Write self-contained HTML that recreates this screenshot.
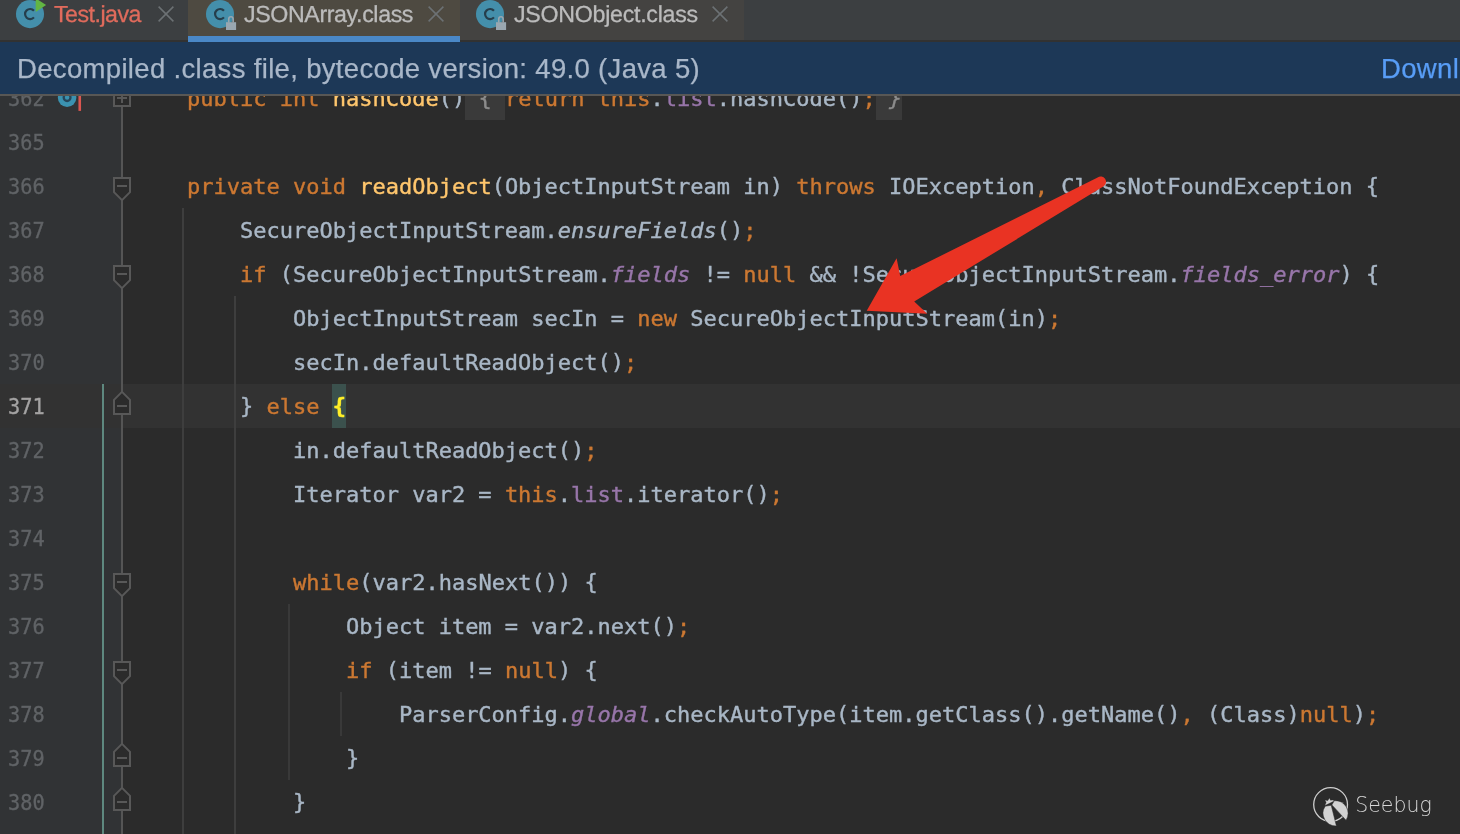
<!DOCTYPE html>
<html><head><meta charset="utf-8"><title>JSONArray.class</title>
<style>
*{margin:0;padding:0;box-sizing:border-box}
html,body{width:1460px;height:834px;overflow:hidden;background:#2b2b2b}
body{position:relative;font-family:"Liberation Sans",sans-serif}
#tabs{will-change:transform;position:absolute;left:0;top:0;width:1460px;height:42px;background:#3c3f41;overflow:hidden}
#tborder{position:absolute;left:0;top:40px;width:1460px;height:2px;background:#323232}
.tabbg{position:absolute;top:0;height:40px}
#uline{position:absolute;left:188px;top:36px;width:272px;height:6px;background:#4a88c7}
.lbl{position:absolute;top:-1px;-webkit-text-stroke-width:0.3px;text-rendering:geometricPrecision;font-size:23.2px;line-height:30px;color:#bbbbbb;white-space:nowrap}
#banner{will-change:transform;-webkit-text-stroke-width:0.25px;position:absolute;left:0;top:42px;width:1460px;height:54px;background:#1d3857;border-bottom:2px solid #585755;color:#a9b7c9;font-size:27.5px;line-height:54px;letter-spacing:0.33px;white-space:nowrap;overflow:hidden}
#editor{will-change:transform;position:absolute;left:0;top:96px;width:1460px;height:738px;overflow:hidden;background:#2b2b2b}
#gutter{position:absolute;left:0;top:0;width:123px;height:738px;background:#313335}
#curline{position:absolute;left:0;width:1460px;height:44px;background:#323232}
#gcur{position:absolute;left:0;width:123px;height:44px;background:#323232}
#foldline{position:absolute;left:121px;top:0;width:2px;height:738px;background:#555555}
#teal{position:absolute;left:102px;width:2px;height:500px;background:#5e887f}
.fm{position:absolute}
.ln{position:absolute;left:8px;-webkit-text-stroke-width:0.35px;margin-top:1px;transform:scale(0.922,0.975);transform-origin:0 30.6px;font-family:"DejaVu Sans Mono","Liberation Mono",monospace;font-size:22px;line-height:44px;height:44px;color:#606366;white-space:pre}
.ln.cur{color:#a4a3a3}
.cl{position:absolute;left:134px;margin-top:1px;-webkit-text-stroke-width:0.4px;font-family:"DejaVu Sans Mono","Liberation Mono",monospace;font-size:22px;line-height:44px;height:44px;color:#a9b7c6;white-space:pre}
.k{color:#cc7832}.m{color:#ffc66d}.f{color:#9876aa}.fi{color:#9876aa;font-style:italic}.i{font-style:italic}
.fold{background:#3a3a3a;color:#8c8c8c;display:inline-block;height:43px;line-height:44px;vertical-align:top}
.mb{color:#ffef28;font-weight:bold}
.fb{position:relative;top:-1.5px}
.p{position:relative;top:-1px}
#mbbg{position:absolute;left:332px;width:14px;height:44px;background:#3b514d}
.g{position:absolute;width:1.5px;background:#393939}
</style></head><body>
<div id="tabs">
<div class="tabbg" style="left:188px;width:272px;background:#4e4a41"></div>
<div class="tabbg" style="left:460px;width:284px;background:#444341"></div>
<div id="tborder"></div>
<div id="uline"></div>
<svg style="position:absolute;left:14px;top:0px" width="36" height="34" viewBox="0 0 36 34"><circle cx="16" cy="14.1" r="14.05" fill="#448fab"/><path d="M19.95 10.75A5.05 5.05 0 1 0 19.95 17.35" fill="none" stroke="#263e4b" stroke-width="2.2"/><path d="M21.7 -1.7L32.1 5.1L21.7 11.9Z" fill="#62b543"/></svg>
<span class="lbl" style="left:54px;color:#e16b5c;letter-spacing:-0.5px">Test.java</span>
<svg style="position:absolute;left:157px;top:5px" width="18" height="18" viewBox="0 0 18 18"><path d="M1.6 1.6L16.4 16.4M16.4 1.6L1.6 16.4" stroke="#6c7174" stroke-width="1.5" fill="none"/></svg>
<svg style="position:absolute;left:204px;top:0px" width="36" height="34" viewBox="0 0 36 34"><circle cx="16" cy="14.1" r="14.05" fill="#448fab"/><path d="M19.95 10.75A5.05 5.05 0 1 0 19.95 17.35" fill="none" stroke="#263e4b" stroke-width="2.2"/><rect x="22" y="22.2" width="10.1" height="7.8" fill="#9aa7b0"/><path d="M24.75 22.5V19A2.2 2.2 0 0 1 29.15 19V22.5" fill="none" stroke="#9aa7b0" stroke-width="1.6"/></svg>
<span class="lbl" style="left:244px;letter-spacing:-0.38px">JSONArray.class</span>
<svg style="position:absolute;left:427px;top:5px" width="18" height="18" viewBox="0 0 18 18"><path d="M1.6 1.6L16.4 16.4M16.4 1.6L1.6 16.4" stroke="#6c7174" stroke-width="1.5" fill="none"/></svg>
<svg style="position:absolute;left:474px;top:0px" width="36" height="34" viewBox="0 0 36 34"><circle cx="16" cy="14.1" r="14.05" fill="#448fab"/><path d="M19.95 10.75A5.05 5.05 0 1 0 19.95 17.35" fill="none" stroke="#263e4b" stroke-width="2.2"/><rect x="22" y="22.2" width="10.1" height="7.8" fill="#9aa7b0"/><path d="M24.75 22.5V19A2.2 2.2 0 0 1 29.15 19V22.5" fill="none" stroke="#9aa7b0" stroke-width="1.6"/></svg>
<span class="lbl" style="left:514px;letter-spacing:-0.27px">JSONObject.class</span>
<svg style="position:absolute;left:711px;top:5px" width="18" height="18" viewBox="0 0 18 18"><path d="M1.6 1.6L16.4 16.4M16.4 1.6L1.6 16.4" stroke="#6c7174" stroke-width="1.5" fill="none"/></svg>
</div>
<div id="banner"><span style="position:absolute;left:17px">Decompiled .class file, bytecode version: 49.0 (Java 5)</span><span style="position:absolute;left:1381px;color:#589df6">Download Sources</span></div>
<div id="editor">
<div id="curline" style="top:288px"></div>
<div id="mbbg" style="top:288px"></div>
<div id="gutter"></div>
<div id="gcur" style="top:288px"></div>
<div id="foldline"></div>
<div id="teal" style="top:288px"></div>
<div class="g" style="left:182.3px;top:112px;height:626px;background:#3e3e3e"></div>
<div class="g" style="left:234.3px;top:200px;height:538px;background:#3e3e3e"></div>
<div class="g" style="left:288px;top:508px;height:176px;background:#393939"></div>
<div class="g" style="left:340.2px;top:596px;height:44px;background:#393939"></div>
<div class="ln" style="top:-20px">362</div>
<div class="cl" style="top:-20px">    <span class="k">public int </span><span class="m">hashCode</span><span class="p">()</span><span class="fold"> <span class="fb">{</span> </span><span class="k">return this</span>.<span class="f">list</span>.hashCode<span class="p">()</span><span class="k">;</span><span class="fold i"> <span class="fb">}</span></span></div>
<svg class="fm" style="left:112px;top:-8px" width="20" height="20" viewBox="0 0 20 20"><path d="M2 2H18V18H2Z" fill="#2b2b2b" stroke="#585858" stroke-width="2"/><path d="M5 10H15M10 5V15" stroke="#585858" stroke-width="2"/></svg>
<div class="ln" style="top:24px">365</div>
<div class="ln" style="top:68px">366</div>
<div class="cl" style="top:68px">    <span class="k">private void </span><span class="m">readObject</span><span class="p">(</span>ObjectInputStream in<span class="p">)</span> <span class="k">throws </span>IOException<span class="k">, </span>ClassNotFoundException <span class="p">{</span></div>
<svg class="fm" style="left:112px;top:80px" width="20" height="26" viewBox="0 0 20 26"><path d="M2 2H18V16.2L10 24.1L2 16.2Z" fill="#2b2b2b" stroke="#585858" stroke-width="2"/><path d="M5 10H15" stroke="#585858" stroke-width="2"/></svg>
<div class="ln" style="top:112px">367</div>
<div class="cl" style="top:112px">        SecureObjectInputStream.<span class="i">ensureFields</span><span class="p">()</span><span class="k">;</span></div>
<div class="ln" style="top:156px">368</div>
<div class="cl" style="top:156px">        <span class="k">if </span><span class="p">(</span>SecureObjectInputStream.<span class="fi">fields</span> != <span class="k">null </span>&amp;&amp; !SecureObjectInputStream.<span class="fi">fields_error</span><span class="p">)</span> <span class="p">{</span></div>
<svg class="fm" style="left:112px;top:168px" width="20" height="26" viewBox="0 0 20 26"><path d="M2 2H18V16.2L10 24.1L2 16.2Z" fill="#2b2b2b" stroke="#585858" stroke-width="2"/><path d="M5 10H15" stroke="#585858" stroke-width="2"/></svg>
<div class="ln" style="top:200px">369</div>
<div class="cl" style="top:200px">            ObjectInputStream secIn = <span class="k">new </span>SecureObjectInputStream<span class="p">(</span>in<span class="p">)</span><span class="k">;</span></div>
<div class="ln" style="top:244px">370</div>
<div class="cl" style="top:244px">            secIn.defaultReadObject<span class="p">()</span><span class="k">;</span></div>
<div class="ln cur" style="top:288px">371</div>
<div class="cl" style="top:288px">        <span class="p">}</span> <span class="k">else </span><span class="mb"><span class="p">{</span></span></div>
<svg class="fm" style="left:112px;top:294px" width="20" height="26" viewBox="0 0 20 26"><path d="M2 24H18V9.8L10 1.9L2 9.8Z" fill="#2b2b2b" stroke="#585858" stroke-width="2"/><path d="M5 16H15" stroke="#585858" stroke-width="2"/></svg>
<div class="ln" style="top:332px">372</div>
<div class="cl" style="top:332px">            in.defaultReadObject<span class="p">()</span><span class="k">;</span></div>
<div class="ln" style="top:376px">373</div>
<div class="cl" style="top:376px">            Iterator var2 = <span class="k">this</span>.<span class="f">list</span>.iterator<span class="p">()</span><span class="k">;</span></div>
<div class="ln" style="top:420px">374</div>
<div class="ln" style="top:464px">375</div>
<div class="cl" style="top:464px">            <span class="k">while</span><span class="p">(</span>var2.hasNext<span class="p">())</span> <span class="p">{</span></div>
<svg class="fm" style="left:112px;top:476px" width="20" height="26" viewBox="0 0 20 26"><path d="M2 2H18V16.2L10 24.1L2 16.2Z" fill="#2b2b2b" stroke="#585858" stroke-width="2"/><path d="M5 10H15" stroke="#585858" stroke-width="2"/></svg>
<div class="ln" style="top:508px">376</div>
<div class="cl" style="top:508px">                Object item = var2.next<span class="p">()</span><span class="k">;</span></div>
<div class="ln" style="top:552px">377</div>
<div class="cl" style="top:552px">                <span class="k">if </span><span class="p">(</span>item != <span class="k">null</span><span class="p">)</span> <span class="p">{</span></div>
<svg class="fm" style="left:112px;top:564px" width="20" height="26" viewBox="0 0 20 26"><path d="M2 2H18V16.2L10 24.1L2 16.2Z" fill="#2b2b2b" stroke="#585858" stroke-width="2"/><path d="M5 10H15" stroke="#585858" stroke-width="2"/></svg>
<div class="ln" style="top:596px">378</div>
<div class="cl" style="top:596px">                    ParserConfig.<span class="fi">global</span>.checkAutoType<span class="p">(</span>item.getClass<span class="p">()</span>.getName<span class="p">()</span><span class="k">, </span><span class="p">(</span>Class<span class="p">)</span><span class="k">null</span><span class="p">)</span><span class="k">;</span></div>
<div class="ln" style="top:640px">379</div>
<div class="cl" style="top:640px">                <span class="p">}</span></div>
<svg class="fm" style="left:112px;top:646px" width="20" height="26" viewBox="0 0 20 26"><path d="M2 24H18V9.8L10 1.9L2 9.8Z" fill="#2b2b2b" stroke="#585858" stroke-width="2"/><path d="M5 16H15" stroke="#585858" stroke-width="2"/></svg>
<div class="ln" style="top:684px">380</div>
<div class="cl" style="top:684px">            <span class="p">}</span></div>
<svg class="fm" style="left:112px;top:690px" width="20" height="26" viewBox="0 0 20 26"><path d="M2 24H18V9.8L10 1.9L2 9.8Z" fill="#2b2b2b" stroke="#585858" stroke-width="2"/><path d="M5 16H15" stroke="#585858" stroke-width="2"/></svg>
<svg style="position:absolute;left:56px;top:-10px" width="28" height="26" viewBox="0 0 28 26"><circle cx="11.1" cy="11.7" r="9.25" fill="#3b92b0"/><circle cx="11.1" cy="11.6" r="3.4" fill="none" stroke="#26465a" stroke-width="2.3"/><path d="M23.75 0V24.9" stroke="#da5650" stroke-width="2.6"/></svg>
</div>
<svg id="arrow" style="position:absolute;left:0;top:0" width="1460" height="834" viewBox="0 0 1460 834">
<path d="M866.7 310.8L896.6 258.3L900.2 276.1L1097.6 177.4A5.3 5.3 0 0 1 1103.7 186.3L914.2 301.5L927.2 313.7Z" fill="#e93323"/>
</svg>
<svg id="logo" style="position:absolute;left:1300px;top:776px" width="160" height="58" viewBox="1300 776 160 58">
<circle cx="1330.6" cy="804.6" r="16.9" fill="none" stroke="#cdcdcd" stroke-width="1.3"/>
<g fill="#d2d2d2" stroke="#2b2b2b" stroke-width="0.5" stroke-linejoin="round">
<path d="M1331.2 805.3L1336.4 825.9A12.7 12.7 0 0 1 1325.2 806.2Z"/>
<path d="M1331.9 804.9L1346 820.2A12.7 12.7 0 0 0 1334.3 800.7Z"/>
<path d="M1324.9 805.6L1326.2 802.4L1325 799.9L1327.7 800.8L1329.5 797.9L1330.4 800.2L1333 800.1L1334.1 801.1Z" stroke-width="0.3"/>
</g>
<text x="1355.2" y="811.6" font-family="DejaVu Sans Light, DejaVu Sans, Liberation Sans, sans-serif" font-weight="200" font-size="21" fill="#d6d6d6" textLength="76.5" lengthAdjust="spacingAndGlyphs">Seebug</text>
</svg>
</body></html>
